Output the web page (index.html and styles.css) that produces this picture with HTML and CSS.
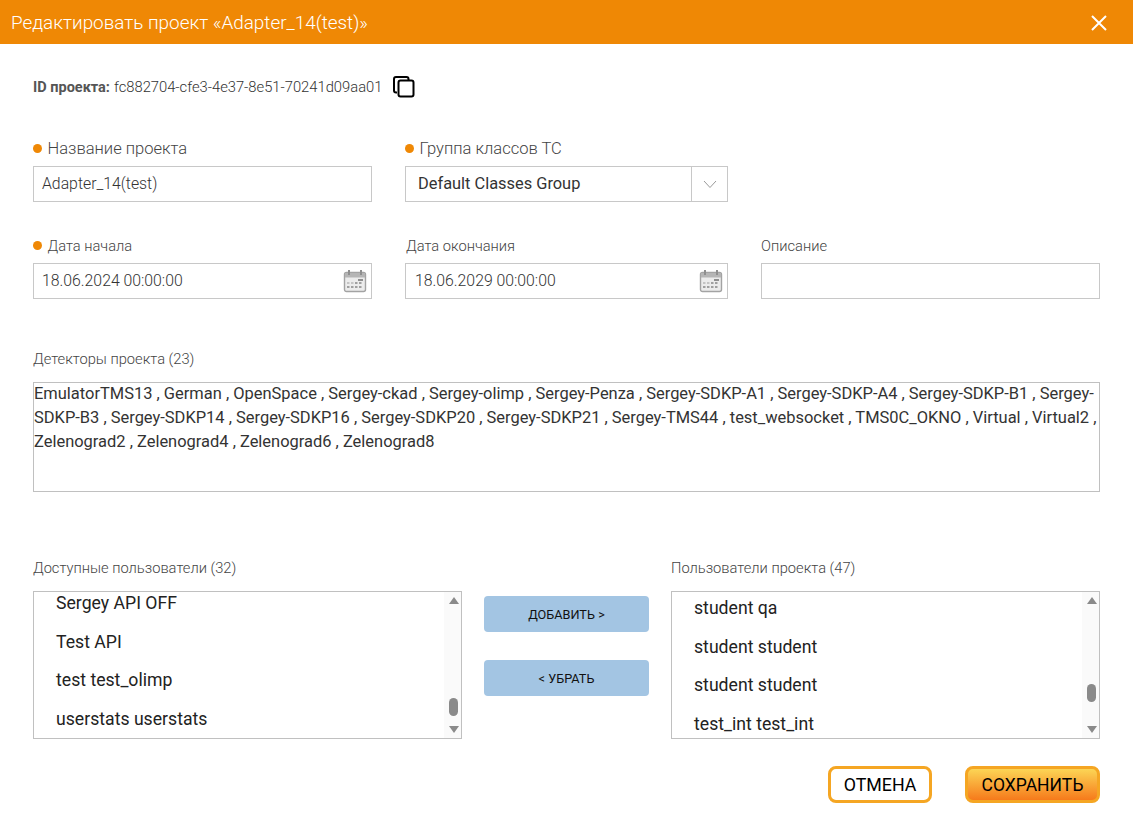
FILE: index.html
```html
<!DOCTYPE html>
<html lang="ru">
<head>
<meta charset="utf-8">
<title>Редактировать проект</title>
<link rel="stylesheet" href="styles.css">
</head>
<body>
<div class="dialog">
  <header class="titlebar">
    <span class="title">Редактировать проект «Adapter_14(test)»</span>
    <svg class="close" width="18" height="18" viewBox="0 0 18 18"><path d="M2 2L16 16M16 2L2 16" stroke="#fff" stroke-width="2" fill="none"/></svg>
  </header>
  <main class="content">
    <div class="idline">
      <b class="idlabel">ID проекта:</b>
      <span class="idvalue">fc882704-cfe3-4e37-8e51-70241d09aa01</span>
      <svg class="copy" width="24" height="24" viewBox="0 0 24 24"><path d="M5 17.500H4a2 2 0 0 1-2-2V4a2 2 0 0 1 2-2h10.500a2 2 0 0 1 2 2V5" fill="none" stroke="#000" stroke-width="2"/><rect x="6.500" y="5.500" width="15" height="16" rx="2" fill="#fff" stroke="#000" stroke-width="2"/></svg>
    </div>

    <div class="row row-name">
      <div class="field f-left">
        <label class="lbl lbl-big req">Название проекта</label>
        <div class="box"><span class="val-light">Adapter_14(test)</span></div>
      </div>
      <div class="field f-mid">
        <label class="lbl lbl-big req">Группа классов ТС</label>
        <div class="box select">
          <span class="val-select">Default Classes Group</span>
          <span class="caret"><svg width="14" height="9" viewBox="0 0 14 9"><path d="M1 1L7 7.500L13 1" fill="none" stroke="#999" stroke-width="1"/></svg></span>
        </div>
      </div>
    </div>

    <div class="row row-date">
      <div class="field f-left">
        <label class="lbl req">Дата начала</label>
        <div class="box date">
          <span class="val-light">18.06.2024 00:00:00</span>
          <svg class="cal" width="24" height="24" viewBox="0 0 24 24"><use href="#cal"/></svg>
        </div>
      </div>
      <div class="field f-mid">
        <label class="lbl lbl-inset">Дата окончания</label>
        <div class="box date box-inset">
          <span class="val-light">18.06.2029 00:00:00</span>
          <svg class="cal" width="24" height="24" viewBox="0 0 24 24"><use href="#cal"/></svg>
        </div>
      </div>
      <div class="field f-right">
        <label class="lbl">Описание</label>
        <div class="box"></div>
      </div>
    </div>

    <div class="detectors">
      <label class="lbl">Детекторы проекта (23)</label>
      <div class="detbox"><div class="dettext">EmulatorTMS13 , German , OpenSpace , Sergey-ckad , Sergey-olimp , Sergey-Penza , Sergey-SDKP-A1 , Sergey-SDKP-A4 , Sergey-SDKP-B1 , Sergey-SDKP-B3 , Sergey-SDKP14 , Sergey-SDKP16 , Sergey-SDKP20 , Sergey-SDKP21 , Sergey-TMS44 , test_websocket , TMS0C_OKNO , Virtual , Virtual2 , Zelenograd2 , Zelenograd4 , Zelenograd6 , Zelenograd8</div></div>
    </div>

    <div class="users">
      <div class="ucol">
        <label class="lbl">Доступные пользователи (32)</label>
        <div class="list list-a">
          <div class="items">
            <div class="item">Sergey API OFF</div>
            <div class="item">Test API</div>
            <div class="item">test test_olimp</div>
            <div class="item">userstats userstats</div>
          </div>
          <div class="sbar">
            <svg class="arrow up" width="10" height="7" viewBox="0 0 10 7"><path d="M5 0L10 7H0Z" fill="#8a8a8a"/></svg>
            <span class="thumb thumb-a"></span>
            <svg class="arrow down" width="10" height="7" viewBox="0 0 10 7"><path d="M0 0H10L5 7Z" fill="#8a8a8a"/></svg>
          </div>
        </div>
      </div>
      <div class="mover">
        <button class="movebtn">ДОБАВИТЬ &gt;</button>
        <button class="movebtn">&lt; УБРАТЬ</button>
      </div>
      <div class="ucol">
        <label class="lbl">Пользователи проекта (47)</label>
        <div class="list list-b">
          <div class="items">
            <div class="item">student qa</div>
            <div class="item">student student</div>
            <div class="item">student student</div>
            <div class="item">test_int test_int</div>
          </div>
          <div class="sbar">
            <svg class="arrow up" width="10" height="7" viewBox="0 0 10 7"><path d="M5 0L10 7H0Z" fill="#8a8a8a"/></svg>
            <span class="thumb thumb-b"></span>
            <svg class="arrow down" width="10" height="7" viewBox="0 0 10 7"><path d="M0 0H10L5 7Z" fill="#8a8a8a"/></svg>
          </div>
        </div>
      </div>
    </div>

    <div class="actions">
      <button class="btn cancel">ОТМЕНА</button>
      <button class="btn save">СОХРАНИТЬ</button>
    </div>
  </main>
</div>
<svg class="defs" width="0" height="0">
  <symbol id="cal" viewBox="0 0 24 24">
    <rect x="1.500" y="3.500" width="21" height="19" rx="2" fill="#ececec" stroke="#a3a3a3" stroke-width="1.400"/>
    <rect x="2" y="4" width="20" height="4.500" fill="#b5b5b5"/>
    <rect x="5" y="1" width="2" height="5" fill="#8f8f8f"/>
    <rect x="17" y="1" width="2" height="5" fill="#8f8f8f"/>
    <rect x="15" y="10" width="5" height="2" fill="#8f8f8f"/>
    <g fill="#c4c4c4"><rect x="4" y="13" width="2.500" height="2"/><rect x="8" y="13" width="2.500" height="2"/></g>
    <g fill="#a0a0a0"><rect x="12" y="13" width="2.500" height="2"/><rect x="16" y="13" width="2.500" height="2"/><rect x="4" y="17" width="2.500" height="2"/><rect x="8" y="17" width="2.500" height="2"/><rect x="12" y="17" width="2.500" height="2"/><rect x="16" y="17" width="2.500" height="2"/></g>
  </symbol>
</svg>
</body>
</html>
```

FILE: styles.css
```css
* { box-sizing: border-box; }
html, body { margin: 0; padding: 0; background: #fff; }
body { font-family: Roboto, "Liberation Sans", sans-serif; color: #222; overflow: hidden; }
.dialog { width: 1133px; height: 836px; }
.defs { position: absolute; }

.titlebar { height: 44px; background: #ef8805; display: flex; align-items: center; justify-content: space-between; padding: 0 25px 0 11px; }
.title { color: #fff; font-size: 18.900px; font-weight: 300; }
.close { display: block; margin-top: 2px; }

.content { padding: 0 33px; }

.idline { display: flex; align-items: center; height: 24px; margin-top: 31px; color: #555; }
.idlabel { font-size: 14.500px; font-weight: 700; margin-right: 4px; }
.idvalue { font-size: 14.750px; font-weight: 300; color: #333; }
.copy { margin-left: 10px; }

.row { display: flex; gap: 33px; }
.row-name { margin-top: 40px; }
.row-date { margin-top: 35px; }
.field { display: flex; flex-direction: column; }
.f-left { width: 339px; }
.f-mid { width: 323px; }
.f-right { width: 339px; }

.lbl { display: block; font-size: 14.700px; line-height: 18px; font-weight: 300; color: #444; }
.lbl-big { font-size: 16.550px; line-height: 20px; }
.lbl-inset { padding-left: 1px; }
.req::before { content: ""; display: inline-block; width: 9px; height: 9px; border-radius: 50%; background: #ef8805; margin-right: 5.500px; vertical-align: 1px; }
.row-name .lbl { margin-bottom: 7px; }
.row-date .lbl { margin-bottom: 8px; }

.box { height: 36px; border: 1px solid #c8c8c8; display: flex; align-items: center; padding-left: 8px; padding-bottom: 2px; background: #fff; }
.box-inset { padding-left: 9px; }
.val-light { font-size: 15.800px; font-weight: 300; color: #333; }
.val-select { font-size: 16.400px; color: #333; padding-left: 4px; flex: 1; }
.select { padding-right: 0; padding-bottom: 0; }
.select .val-select { padding-bottom: 2px; }
.caret { width: 36px; height: 100%; border-left: 1px solid #c8c8c8; display: flex; align-items: center; justify-content: center; }
.date { justify-content: space-between; padding-right: 4px; padding-bottom: 0; }
.date .val-light { padding-bottom: 2px; }

.detectors { margin-top: 51px; }
.detectors .lbl { margin-bottom: 14px; }
.detbox { height: 110px; border: 1px solid #c0c0c0; padding: 0; font-size: 16.470px; line-height: 24px; color: #333; }
.dettext { margin-top: -1px; }

.users { display: flex; margin-top: 67px; }
.ucol { width: 429px; flex: none; }
.ucol .lbl { margin-bottom: 14px; }
.mover { flex: 1; display: flex; flex-direction: column; gap: 28px; align-items: center; padding-top: 37px; }
.movebtn { width: 165px; height: 36px; background: #a3c5e3; border: 0; border-radius: 4px; font-family: inherit; font-size: 12.700px; color: #111; padding: 0; }

.list { height: 148px; border: 1px solid #c0c0c0; display: flex; overflow: hidden; }
.items { flex: 1; padding-left: 22px; font-size: 17.650px; color: #222; }
.item { height: 38.500px; line-height: 38.500px; }
.list-a .items { margin-top: -8px; }
.list-b .items { margin-top: -3px; }
.sbar { position: relative; width: 17px; background: #fafafa; flex: none; }
.arrow { position: absolute; left: 4.500px; }
.arrow.up { top: 5px; }
.arrow.down { bottom: 5px; }
.thumb { position: absolute; left: 5px; width: 9px; border-radius: 4.500px; background: #8a8a8a; height: 18px; }
.thumb-a { top: 106px; }
.thumb-b { top: 92px; }

.actions { display: flex; justify-content: flex-end; gap: 33px; margin-top: 27px; }
.btn { height: 37px; border: 3px solid #f5a623; border-radius: 8px; font-family: inherit; font-size: 17.800px; color: #000; padding: 0; }
.cancel { width: 104px; background: #fff; }
.save { width: 135px; font-size: 17.500px; background: linear-gradient(#fcd555, #f67a1b); }
```
